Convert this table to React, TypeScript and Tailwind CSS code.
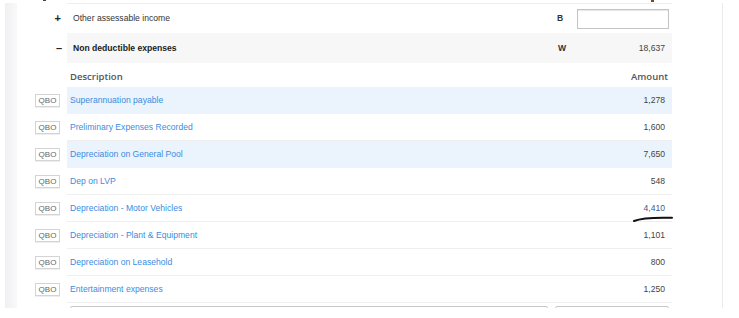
const rows = [
  { label: 'Superannuation payable', amount: '1,278', shaded: true },
  { label: 'Preliminary Expenses Recorded', amount: '1,600', shaded: false },
  { label: 'Depreciation on General Pool', amount: '7,650', shaded: true },
  { label: 'Dep on LVP', amount: '548', shaded: false },
  { label: 'Depreciation - Motor Vehicles', amount: '4,410', shaded: false, marked: true },
  { label: 'Depreciation - Plant & Equipment', amount: '1,101', shaded: false },
  { label: 'Depreciation on Leasehold', amount: '800', shaded: false },
  { label: 'Entertainment expenses', amount: '1,250', shaded: false },
];

function QboButton() {
  return (
    <span className="flex h-[13px] w-[25px] items-center justify-center border border-[#d4d4d4] bg-white text-[8px] text-[#666] shadow-[0_1px_0_#eee]">
      QBO
    </span>
  );
}

export default function App() {
  return (
    <div className="relative h-[318px] w-[739px] overflow-hidden bg-white pl-[5px] pt-[3px] font-['Liberation_Sans',Arial,sans-serif] text-[8.6px] text-[#333]">
      {/* bits of the page above, cut off */}
      <span className="absolute left-[43px] top-0 h-[1px] w-[3px] bg-[#444]" />
      <span className="absolute left-[651px] top-0 h-[2px] w-[3px] bg-[#7a4a14]" />

      <div className="flex h-[305px] w-[718px] overflow-hidden">
        <div className="w-[12px] bg-gradient-to-r from-[#f0f0f2] to-[#f9f9fa]" />
        <div className="flex flex-1 flex-col border-r border-[#ebebeb]">
          {/* other assessable income */}
          <div className="flex h-[30px] shrink-0">
            <div className="flex w-[50px] items-center justify-end pr-[6px] text-[11px] font-bold text-[#222]">+</div>
            <div className="flex w-[605px] items-center border-t border-[#eeeeee] pl-[6px] pr-[3px]">
              <span className="flex-1">Other assessable income</span>
              <span className="w-[20px] font-bold text-[#333]">B</span>
              <span className="h-[20px] w-[92px] border border-[#c4c4c4] bg-white shadow-[inset_0_1px_1px_#e6e6e6]" />
            </div>
          </div>

          {/* non deductible expenses */}
          <div className="flex h-[30px] shrink-0">
            <div className="flex w-[50px] items-center justify-end pr-[5px] text-[11px] font-bold text-[#222]">–</div>
            <div className="flex w-[605px] items-center bg-[#f7f7f7] pl-[6px] pr-[3px]">
              <span className="flex-1 font-bold text-[#222]">Non deductible expenses</span>
              <span className="w-[20px] pl-[1px] font-bold text-[#333]">W</span>
              <span className="w-[92px] pr-[4px] text-right text-[#444]">18,637</span>
            </div>
          </div>

          {/* header */}
          <div className="flex h-[24px] shrink-0">
            <div className="w-[50px]" />
            <div className="flex w-[605px] items-end justify-between pb-[3px] pl-[3px] pr-[4px] font-['Open_Sans',sans-serif] text-[9.5px] font-semibold text-[#555]">
              <span>Description</span>
              <span>Amount</span>
            </div>
          </div>

          {rows.map((r) => (
            <div key={r.label} className="flex h-[27px] shrink-0">
              <div className="flex w-[50px] items-center justify-end pr-[7px]">
                <QboButton />
              </div>
              <div
                className={`relative flex w-[605px] items-center justify-between border-b pl-[3px] pr-[7px] ${
                  r.shaded ? 'border-[#ebf3fc] bg-[#ebf3fc]' : 'border-[#efefef] bg-white'
                }`}
              >
                <span className="text-[#3a8ddf]">{r.label}</span>
                <span className={r.marked ? 'text-[#3f5a86]' : 'text-[#444]'}>{r.amount}</span>
                {r.marked && (
                  <svg className="absolute right-[-2px] top-[19px] h-[9px] w-[42px]" viewBox="0 0 42 9" fill="none">
                    <path d="M2 7 C 8 4.5, 17 3.2, 40 3.8" stroke="#111" strokeWidth="2" strokeLinecap="round" />
                  </svg>
                )}
              </div>
            </div>
          ))}

          {/* next inputs, cut off */}
          <div className="flex shrink-0 pt-[3px]">
            <div className="w-[50px]" />
            <div className="flex w-[605px] gap-[7px] pl-[3px] pr-[3px]">
              <span className="h-[20px] w-[478px] rounded-[2px] border border-[#c8c8c8]" />
              <span className="h-[20px] flex-1 rounded-[2px] border border-[#c8c8c8]" />
            </div>
          </div>
        </div>
      </div>
    </div>
  );
}
